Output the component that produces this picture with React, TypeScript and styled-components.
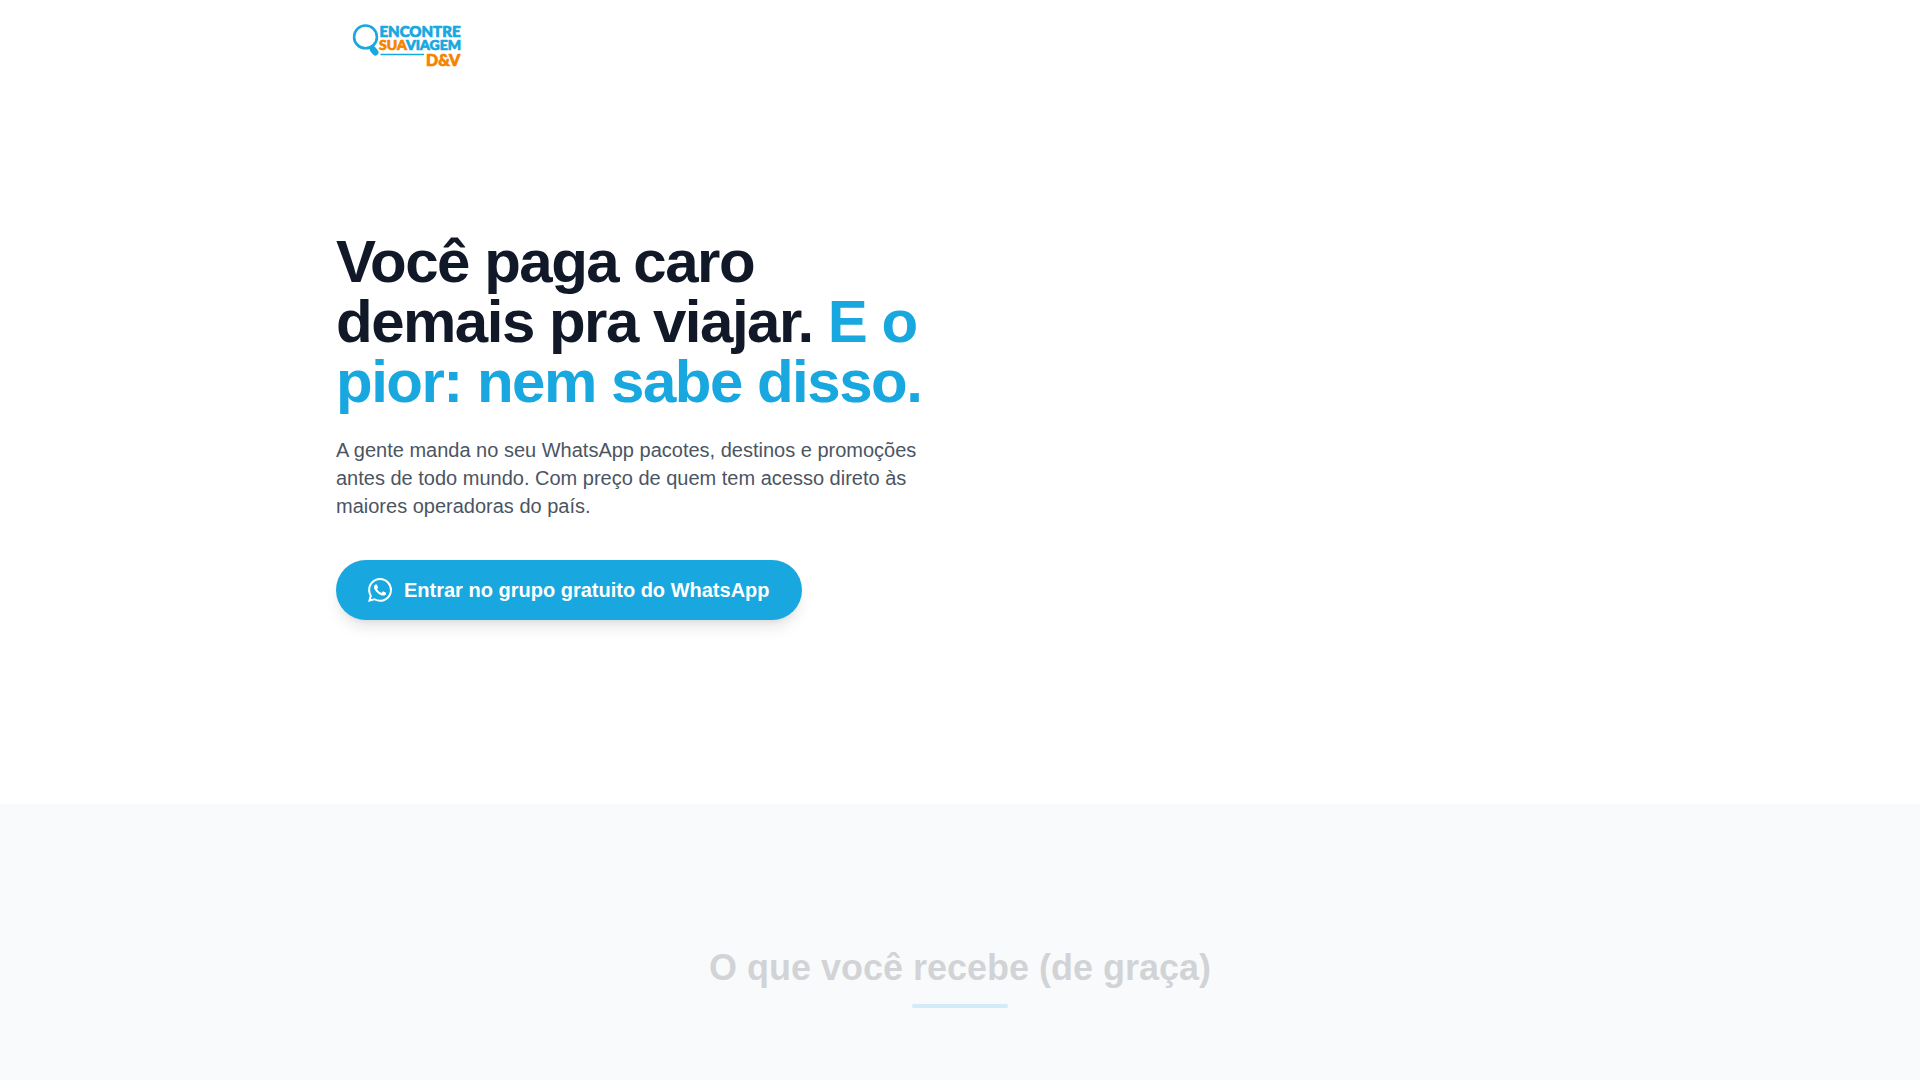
import React from "react";
import styled, { createGlobalStyle } from "styled-components";
import { SiWhatsapp } from "react-icons/si";

const brand = "#18a7de";
const accent = "#f58300";

const GlobalStyle = createGlobalStyle`
  *, *::before, *::after { box-sizing: border-box; }
  body {
    margin: 0;
    background: #ffffff;
    color: #111827;
    font-family: "Liberation Sans", Arial, sans-serif;
  }
  h1, h2, p { margin: 0; }
`;

const Container = styled.div`
  width: 100%;
  max-width: 1280px;
  margin: 0 auto;
  padding: 0 16px;
`;

const Header = styled.header`
  padding: 24px 0;
`;

const HomeLink = styled.a`
  display: flex;
  width: fit-content;
  margin-left: 16px;
`;

const LogoDrawing = styled.svg`
  overflow: visible;
`;

const LogoWord = styled.text<{ $size: number; $color: string }>`
  font-family: Lato, sans-serif;
  font-weight: 900;
  font-size: ${(p) => p.$size}px;
  fill: ${(p) => p.$color};
  stroke: ${(p) => p.$color};
  stroke-width: 0.7px;
  stroke-linejoin: round;
`;

const Hero = styled.section`
  padding: 140px 0 184px;
`;

const HeroGrid = styled(Container)`
  display: grid;
  grid-template-columns: repeat(2, minmax(0, 1fr));
  gap: 48px;
  align-items: center;

  @media (max-width: 900px) {
    grid-template-columns: minmax(0, 1fr);
  }
`;

const Title = styled.h1`
  font-size: 60px;
  line-height: 60px;
  font-weight: 700;
  letter-spacing: -0.025em;
`;

const Highlight = styled.span`
  color: ${brand};
`;

const Lead = styled.p`
  margin-top: 24px;
  font-size: 20px;
  line-height: 28px;
  color: #4b5563;
`;

const CallToAction = styled.a`
  display: inline-flex;
  align-items: center;
  gap: 12px;
  margin-top: 40px;
  padding: 16px 32px;
  border-radius: 9999px;
  background: ${brand};
  color: #ffffff;
  font-size: 20px;
  line-height: 28px;
  font-weight: 700;
  text-decoration: none;
  box-shadow: 0 10px 15px -3px rgba(0, 0, 0, 0.1), 0 4px 6px -4px rgba(0, 0, 0, 0.1);
`;

const Benefits = styled.section`
  padding: 144px 0 128px;
  background: #f9fafb;
`;

const SectionHeading = styled(Container)`
  display: flex;
  flex-direction: column;
  align-items: center;
  gap: 16px;
  text-align: center;
  opacity: 0.17;
`;

const SectionTitle = styled.h2`
  font-size: 36px;
  line-height: 40px;
  font-weight: 700;
`;

const Underline = styled.div`
  width: 96px;
  height: 4px;
  border-radius: 2px;
  background: ${brand};
`;

function Logo() {
  return (
    <LogoDrawing width="112" height="44" viewBox="0 0 112 44" role="img" aria-label="Encontre Sua Viagem D&V">
      <circle cx="13.5" cy="12.9" r="11.4" fill="none" stroke={brand} strokeWidth="2.6" />
      <path d="M18.5 22.5L20.5 25" stroke={brand} strokeWidth="4" />
      <path d="M21 25.5L23.3 28.3" stroke={brand} strokeWidth="6.4" strokeLinecap="round" />
      <LogoWord x="27.5" y="12.5" $size={15} $color={brand}>ENCONTRE</LogoWord>
      <LogoWord x="27" y="26" $size={14} $color={accent}>
        SUA<tspan fill={brand} stroke={brand}>VIAGEM</tspan>
      </LogoWord>
      <path d="M28.5 30.5H72" stroke={brand} strokeWidth="1.4" />
      <LogoWord x="74" y="41.5" $size={16} $color={accent}>D&amp;V</LogoWord>
    </LogoDrawing>
  );
}

export default function App() {
  return (
    <>
      <GlobalStyle />
      <Header>
        <Container>
          <HomeLink href="#">
            <Logo />
          </HomeLink>
        </Container>
      </Header>
      <main>
        <Hero>
          <HeroGrid>
            <div>
              <Title>
                Você paga caro demais pra viajar. <Highlight>E o pior: nem sabe disso.</Highlight>
              </Title>
              <Lead>
                A gente manda no seu WhatsApp pacotes, destinos e promoções antes de todo mundo. Com
                preço de quem tem acesso direto às maiores operadoras do país.
              </Lead>
              <CallToAction href="#grupo">
                <SiWhatsapp size={24} aria-hidden />
                Entrar no grupo gratuito do WhatsApp
              </CallToAction>
            </div>
          </HeroGrid>
        </Hero>
        <Benefits>
          <SectionHeading>
            <SectionTitle>O que você recebe (de graça)</SectionTitle>
            <Underline />
          </SectionHeading>
        </Benefits>
      </main>
    </>
  );
}
